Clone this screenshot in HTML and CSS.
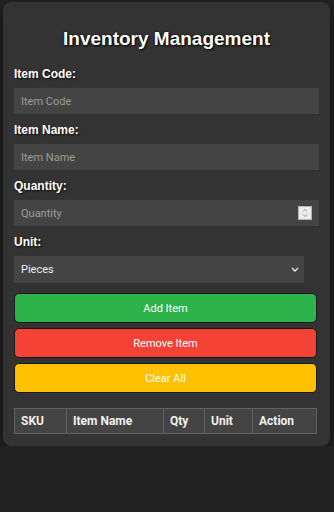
FILE: index.html
```html
<!DOCTYPE html>
<html lang="en">
<head>
<meta charset="utf-8">
<title>Inventory Management</title>
<link rel="stylesheet" href="styles.css">
</head>
<body>
<div class="container">
  <h1 class="title">Inventory Management</h1>
  <div class="field">
    <label class="label" for="code">Item Code:</label>
    <input class="input" id="code" type="text" placeholder="Item Code">
  </div>
  <div class="field">
    <label class="label" for="name">Item Name:</label>
    <input class="input" id="name" type="text" placeholder="Item Name">
  </div>
  <div class="field">
    <label class="label" for="qty">Quantity:</label>
    <div class="num-wrap">
      <input class="input" id="qty" type="number" placeholder="Quantity">
      <span class="spinner">
        <svg width="14" height="14" viewBox="0 0 14 14">
          <rect x="0.5" y="0.5" width="13" height="13" fill="#ececec" stroke="#b5b5b5"/>
          <path d="M5 5.5 L7 3.5 L9 5.5" fill="none" stroke="#9a9a9a" stroke-width="1"/>
          <path d="M5 8.5 L7 10.5 L9 8.5" fill="none" stroke="#9a9a9a" stroke-width="1"/>
        </svg>
      </span>
    </div>
  </div>
  <div class="field">
    <label class="label" for="unit">Unit:</label>
    <div class="select-wrap">
      <select class="select" id="unit">
        <option>Pieces</option>
        <option>Boxes</option>
        <option>Kg</option>
      </select>
      <svg class="chev" width="8" height="5" viewBox="0 0 8 5">
        <path d="M1 1 L4 4 L7 1" fill="none" stroke="#e6e6e6" stroke-width="1.4"/>
      </svg>
    </div>
  </div>
  <div class="buttons">
    <button class="btn btn-add">Add Item</button>
    <button class="btn btn-remove">Remove Item</button>
    <button class="btn btn-clear">Clear All</button>
  </div>
  <table class="table">
    <thead>
      <tr>
        <th class="c-sku">SKU</th>
        <th class="c-name">Item Name</th>
        <th class="c-qty">Qty</th>
        <th class="c-unit">Unit</th>
        <th class="c-act">Action</th>
      </tr>
    </thead>
    <tbody></tbody>
  </table>
</div>
</body>
</html>
```
FILE: styles.css
```css
html, body {
  margin: 0;
  padding: 0;
}
body {
  background: #222222;
  font-family: "Liberation Sans", Arial, sans-serif;
  color: #fff;
  padding-top: 2px;
}
.container {
  margin: 0 4px 0 3px;
  background: #333333;
  padding: 11px 11px 12px;
  border-radius: 8px;
  box-shadow: 0 4px 12px rgba(0, 0, 0, 0.55);
}
.title {
  margin: 14px 0 17px;
  font-size: 19px;
  line-height: 23px;
  font-weight: bold;
  text-align: center;
  color: #fff;
  text-shadow: 1px 1px 2px rgba(0, 0, 0, 0.9), 0 0 2px rgba(0, 0, 0, 0.8);
}
.field {
  margin-bottom: 9px;
}
.label {
  display: block;
  font-size: 12px;
  line-height: 15px;
  font-weight: bold;
  color: #fff;
  margin-bottom: 6px;
  text-shadow: 1px 1px 2px rgba(0, 0, 0, 0.9);
}
.input {
  display: block;
  box-sizing: border-box;
  width: 100%;
  height: 26px;
  padding: 0 7px;
  border: none;
  outline: none;
  background: #444444;
  color: #eeeeee;
  font-family: Roboto, "Liberation Sans", sans-serif;
  font-size: 11px;
  margin: 0;
}
.input::placeholder {
  color: #9c9c9c;
}
.input::-webkit-inner-spin-button,
.input::-webkit-outer-spin-button {
  -webkit-appearance: none;
  margin: 0;
}
.num-wrap {
  position: relative;
}
.spinner {
  position: absolute;
  right: 7px;
  top: 6px;
  width: 14px;
  height: 14px;
  display: block;
}
.spinner svg {
  display: block;
}
.select-wrap {
  position: relative;
  width: 95%;
}
.select {
  display: block;
  box-sizing: border-box;
  width: 100%;
  height: 27px;
  padding: 0 7px;
  border: none;
  outline: none;
  border-radius: 0;
  background: #444444;
  color: #eeeeee;
  font-family: Roboto, "Liberation Sans", sans-serif;
  font-size: 11px;
  -webkit-appearance: none;
  appearance: none;
}
.chev {
  position: absolute;
  right: 5px;
  top: 11px;
  display: block;
}
.buttons {
  margin-top: 10px;
  display: flex;
  flex-direction: column;
  gap: 5px;
}
.btn {
  display: block;
  box-sizing: border-box;
  width: calc(100% - 2px);
  height: 30px;
  border: 1px solid #17171f;
  border-radius: 5px;
  color: #ffffff;
  font-family: Roboto, "Liberation Sans", sans-serif;
  font-size: 11px;
  padding: 0;
  margin: 0;
  cursor: pointer;
}
.btn-add {
  background: #2db34a;
}
.btn-remove {
  background: #f44336;
}
.btn-clear {
  background: #ffc000;
}
.table {
  margin-top: 15px;
  width: calc(100% - 2px);
  border-collapse: collapse;
  table-layout: fixed;
}
.table th {
  background: #444444;
  border: 1px solid #626262;
  height: 25px;
  box-sizing: border-box;
  padding: 0 6px;
  text-align: left;
  font-family: Roboto, "Liberation Sans", sans-serif;
  font-size: 12px;
  font-weight: bold;
  color: #f0f0f0;
}
.c-sku { width: 52px; }
.c-name { width: 97px; }
.c-qty { width: 41px; }
.c-unit { width: 48px; }
```
